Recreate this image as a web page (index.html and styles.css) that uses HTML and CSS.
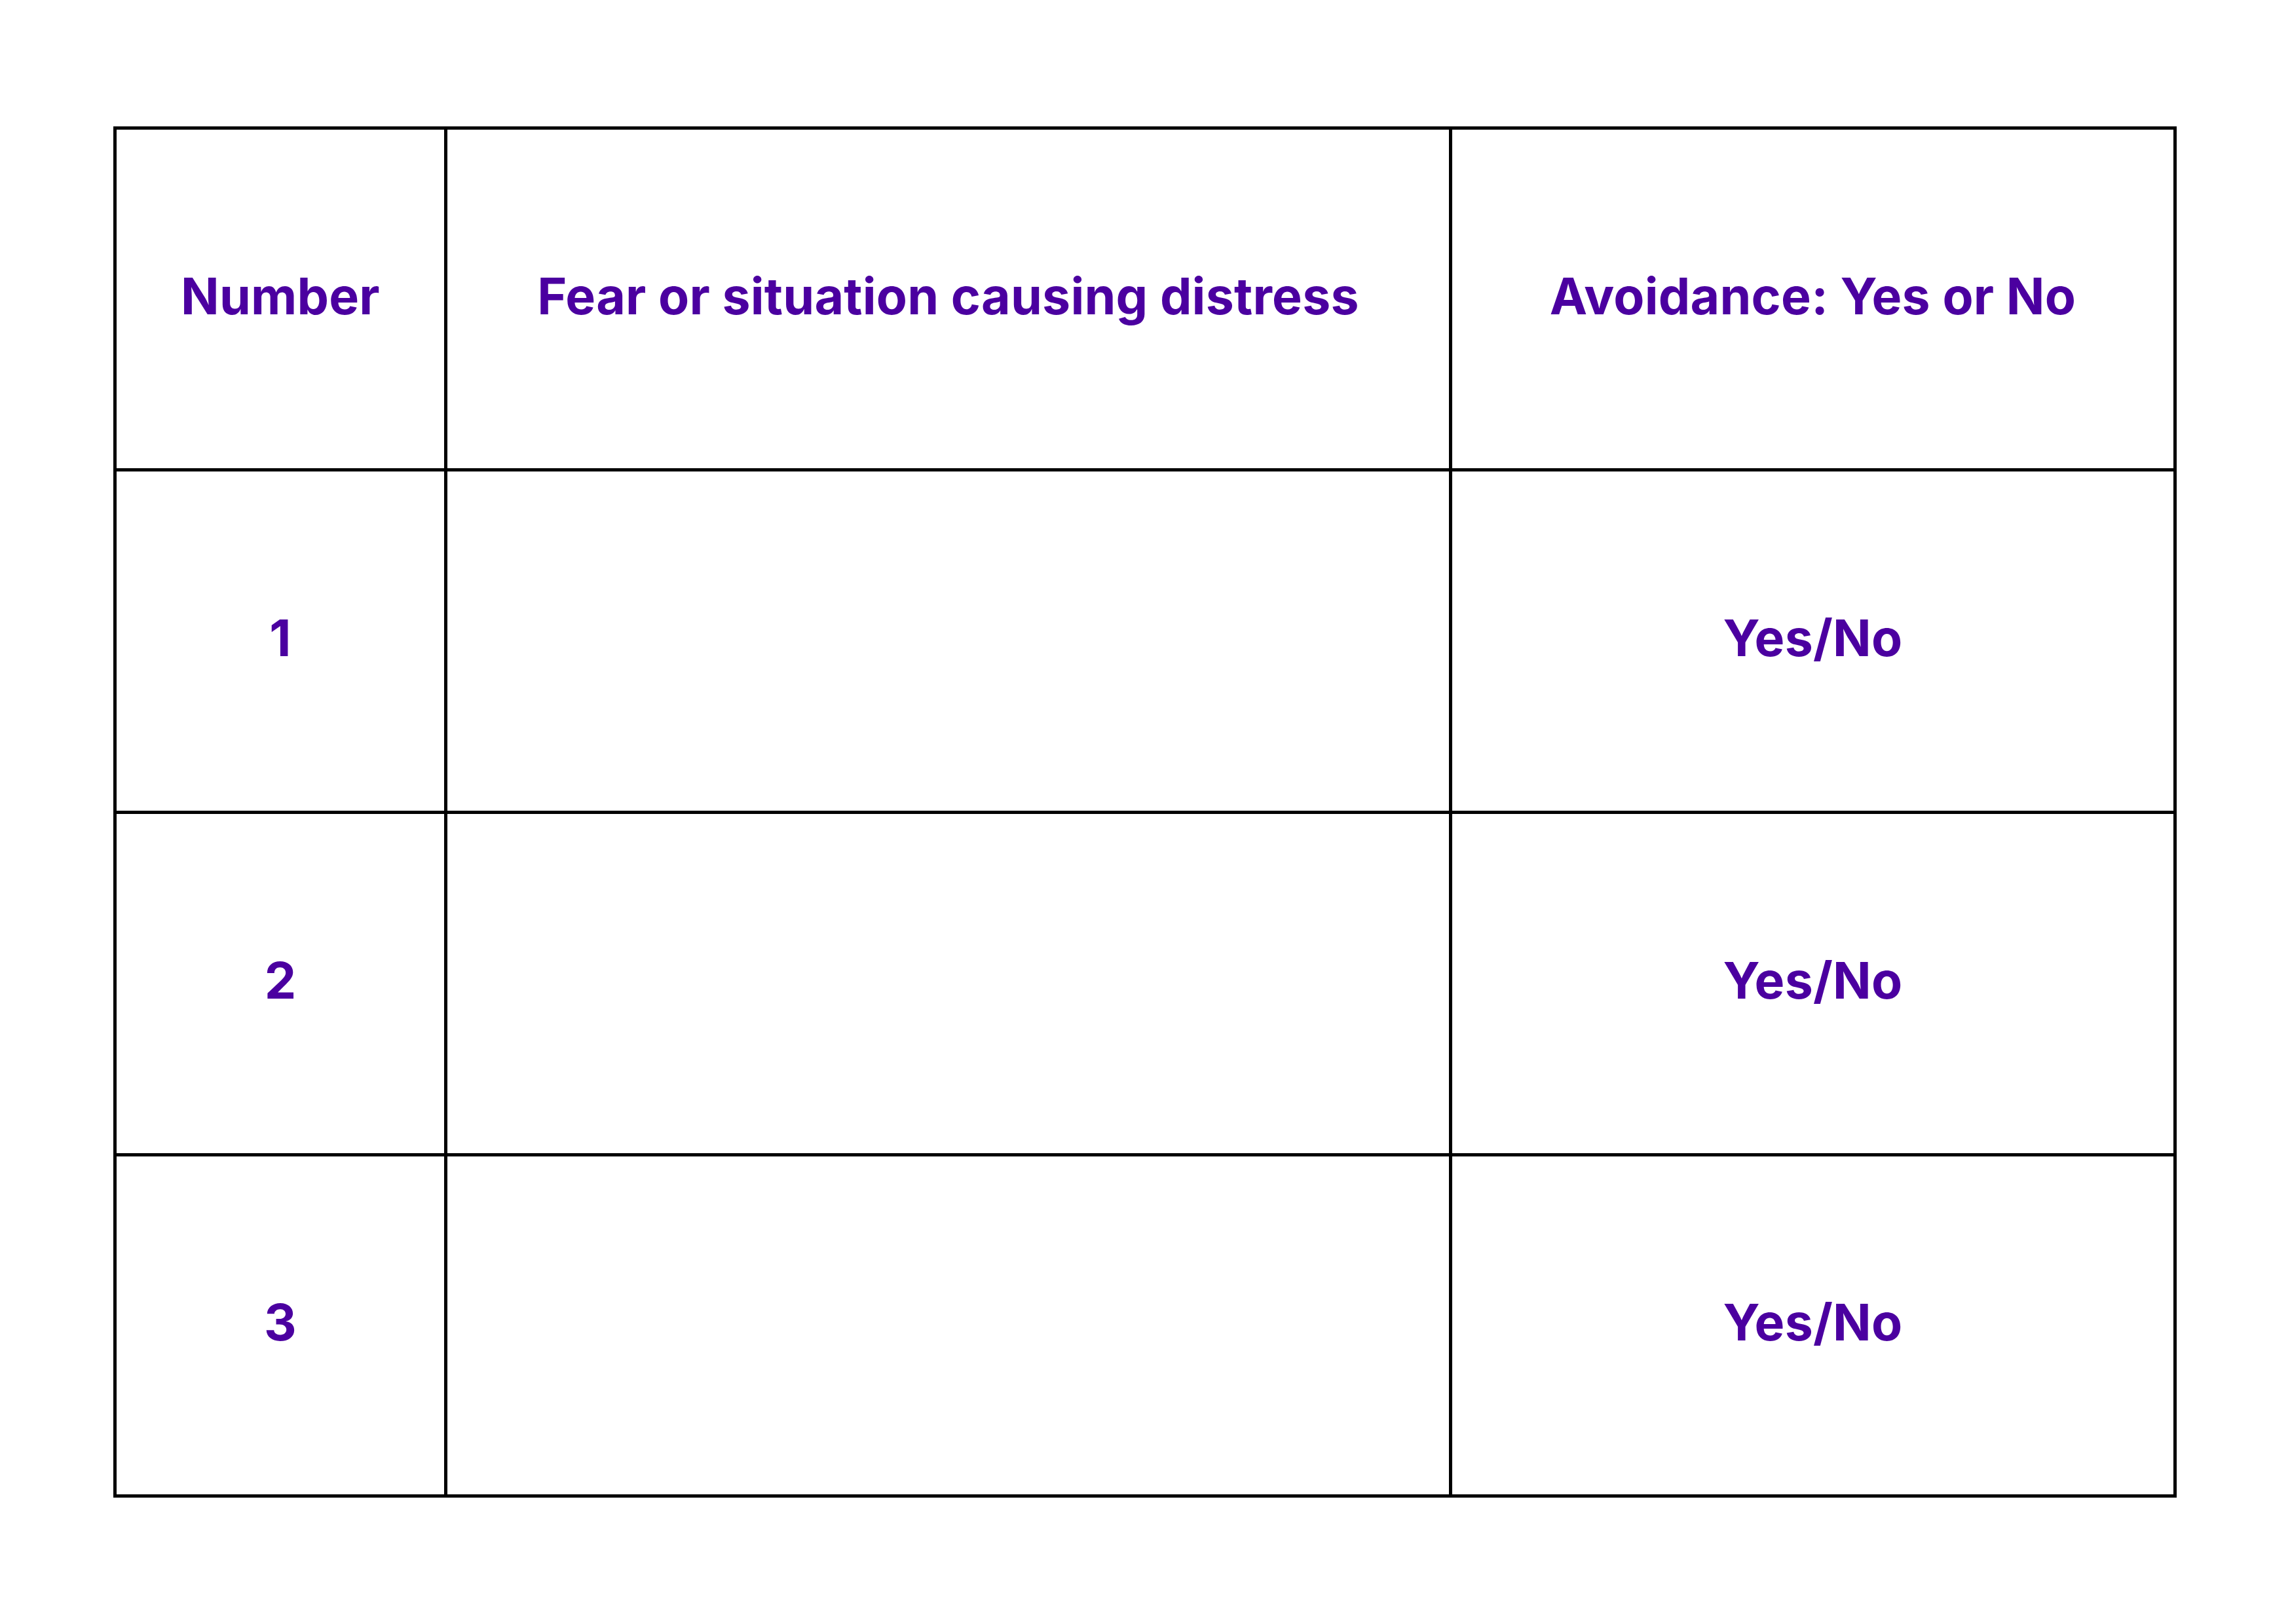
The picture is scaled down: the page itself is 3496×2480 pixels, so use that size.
FILE: index.html
```html
<!DOCTYPE html>
<html lang="en">
<head>
<meta charset="utf-8">
<title>Fear and avoidance table</title>
<link rel="stylesheet" href="styles.css">
</head>
<body>
<main class="page">
  <div class="table">
    <div class="cell head">Number</div>
    <div class="cell head">Fear or situation causing distress</div>
    <div class="cell head">Avoidance: Yes or No</div>

    <div class="cell">1</div>
    <div class="cell"></div>
    <div class="cell">Yes/No</div>

    <div class="cell">2</div>
    <div class="cell"></div>
    <div class="cell">Yes/No</div>

    <div class="cell">3</div>
    <div class="cell"></div>
    <div class="cell">Yes/No</div>
  </div>
</main>
</body>
</html>
```

FILE: styles.css
```css
html, body {
  margin: 0;
  padding: 0;
  background: #ffffff;
}

.page {
  width: 3496px;
  height: 2480px;
  padding: 193px 0 0 173px;
  box-sizing: border-box;
}

.table {
  width: 3150px;
  height: 2094px;
  box-sizing: border-box;
  display: grid;
  grid-template-columns: 500px 1529px 1101px;
  grid-template-rows: 517px 518px 518px 516px;
  gap: 5px;
  padding: 5px;
  background: #000000;
}

.cell {
  background: #ffffff;
  display: flex;
  align-items: center;
  justify-content: center;
  font-family: "Inter", "Liberation Sans", sans-serif;
  font-weight: 700;
  font-size: 77px;
  letter-spacing: 0.2px;
  font-variant-ligatures: none;
  color: #4b00a0;
  padding-bottom: 10px;
  box-sizing: border-box;
}
```
